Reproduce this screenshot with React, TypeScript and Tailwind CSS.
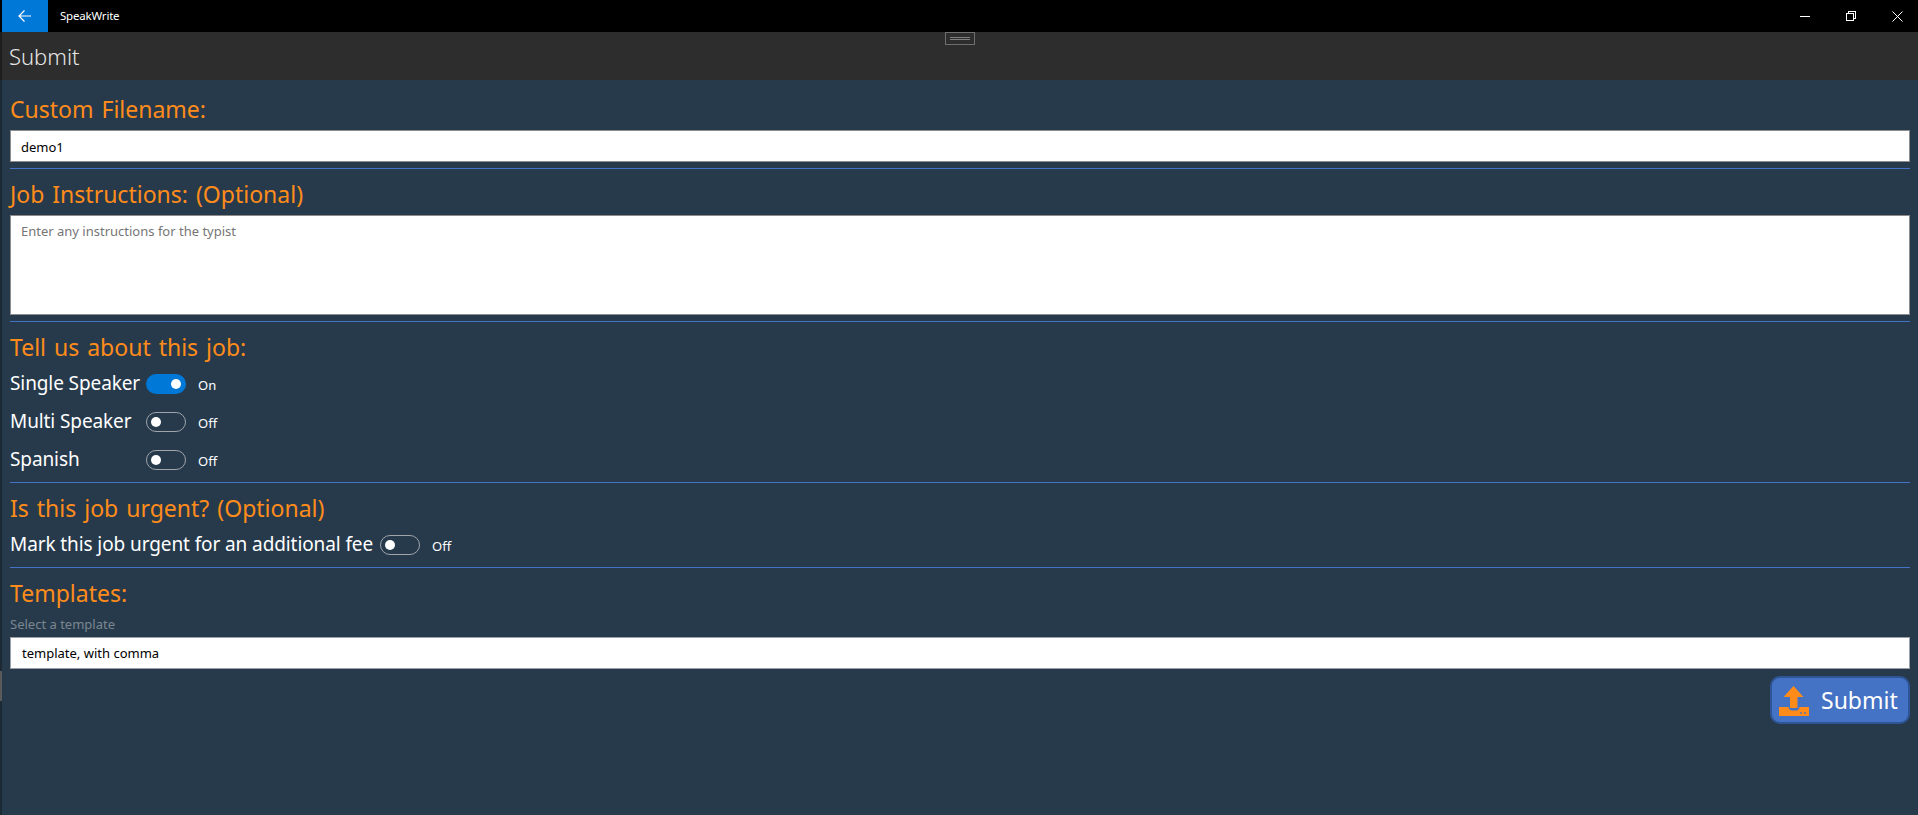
const font = { fontFamily: '"Noto Sans", "Open Sans", sans-serif' };

function Toggle({ on }: { on?: boolean }) {
  return (
    <div className={on ? "flex h-5 w-10 items-center justify-end rounded-full bg-[#0078d7] px-[5px]" : "flex h-5 w-10 items-center justify-start rounded-full border border-[#a0a5aa] px-[4px]"}>
      <div className="h-[10px] w-[10px] rounded-full bg-white" />
    </div>
  );
}

function Heading({ children }: { children: string }) {
  return <div className="h-[26px] text-[23px] leading-[26px] text-[#ff8c1a] [word-spacing:2px]">{children}</div>;
}

function Divider() {
  return <div className="h-px bg-[#4472c4]" />;
}

function ToggleRow({ label, on, labelW }: { label: string; on?: boolean; labelW: string }) {
  return (
    <div className="flex h-5 items-center">
      <div className={`${labelW} pb-[2px] text-[19px] leading-5 tracking-[-0.1px] text-white`}>{label}</div>
      <Toggle on={on} />
      <div className="ml-3 pt-[2px] text-[13px] leading-5 text-white">{on ? "On" : "Off"}</div>
    </div>
  );
}

export default function App() {
  return (
    <div style={font} className="flex h-[815px] w-[1918px] flex-col overflow-hidden bg-[#263a4c]">
      <div className="flex h-8 shrink-0 items-center bg-black pl-[2px]">
        <div className="flex h-8 w-[46px] items-center justify-center bg-[#0078d7]">
          <svg width="16" height="16" viewBox="0 0 16 16" fill="none" stroke="white" strokeWidth="1.2">
            <path d="M7.5 2.5 2 8l5.5 5.5M2 8h12" />
          </svg>
        </div>
        <div className="ml-3 text-[11.5px] leading-8 tracking-[-0.2px] text-white">SpeakWrite</div>
        <div className="ml-auto -mr-[2px] flex h-8 items-center">
          <div className="flex h-8 w-[46px] items-center justify-center">
            <div className="h-px w-[10px] bg-white" />
          </div>
          <div className="flex h-8 w-[46px] items-center justify-center">
            <svg width="10" height="10" viewBox="0 0 10 10" fill="none" stroke="white" strokeWidth="1" shapeRendering="crispEdges">
              <path d="M.5 2.5h7v7h-7zM2.5 2.5V.5h7v7H7.5" />
            </svg>
          </div>
          <div className="flex h-8 w-[46px] items-center justify-center">
            <svg width="11" height="11" viewBox="0 0 11 11" fill="none" stroke="white" strokeWidth="1">
              <path d="M.5.5l10 10M10.5.5l-10 10" />
            </svg>
          </div>
        </div>
      </div>
      <div className="relative flex h-12 shrink-0 items-center border-l-2 border-[#1e1e1e] bg-[#2d2d2d] pl-[7px] text-[22px] font-light text-[#e6e6e6]">
        Submit
        <div className="absolute left-[943px] top-0 flex h-[13px] w-[30px] flex-col items-center justify-center gap-[1px] border border-[#6e6e6e]">
          <div className="h-px w-5 bg-[#7f7f7f]" />
          <div className="h-px w-5 bg-[#7f7f7f]" />
        </div>
      </div>
      <div className="flex flex-1">
        <div className="flex w-[2px] shrink-0 flex-col bg-[#1c2a35]">
          <div className="mt-[591px] h-[30px] bg-[#5a5a5a]" />
        </div>
        <div className="flex w-full flex-col pl-2 pr-2">
          <div className="mt-4"><Heading>Custom Filename:</Heading></div>
          <div className="mt-2 flex h-8 items-center border border-[#8c8c8c] bg-white px-[10px] pt-[3px] text-[13px] text-black">demo1</div>
          <div className="mt-[6px]"><Divider /></div>
          <div className="mt-[12px]"><Heading>Job Instructions: (Optional)</Heading></div>
          <div className="mt-2 h-[100px] border border-[#8c8c8c] bg-white px-[10px] pt-[5px] text-[13px] leading-5 text-[#767676]">Enter any instructions for the typist</div>
          <div className="mt-[6px]"><Divider /></div>
          <div className="mt-[12px]"><Heading>Tell us about this job:</Heading></div>
          <div className="mt-[14px] flex flex-col gap-[18px]">
            <ToggleRow label="Single Speaker" on labelW="w-[136px]" />
            <ToggleRow label="Multi Speaker" labelW="w-[136px]" />
            <ToggleRow label="Spanish" labelW="w-[136px]" />
          </div>
          <div className="mt-3"><Divider /></div>
          <div className="mt-[12px]"><Heading>Is this job urgent? (Optional)</Heading></div>
          <div className="mt-[14px]"><ToggleRow label="Mark this job urgent for an additional fee" labelW="w-[370px]" /></div>
          <div className="mt-3"><Divider /></div>
          <div className="mt-[12px]"><Heading>Templates:</Heading></div>
          <div className="mt-2 h-5 text-[13px] leading-5 text-[#7b8690]">Select a template</div>
          <div className="mt-[3px] flex h-8 items-center border border-[#9aa0a6] bg-white px-[11px] pt-[2px] text-[13px] text-black">template, with comma</div>
          <div className="mt-[7px] flex justify-end">
            <div className="flex h-[48px] w-[140px] items-center rounded-[10px] border-2 border-[#2f5597] bg-[#4472c4] pl-[7px] pt-[1px] text-[23px] text-white">
              <svg width="30" height="30" viewBox="0 0 30 30" fill="#ff8c1a">
                <path d="M14.5 0 24.5 11H18.5V22H11V11H4.5z" />
                <path d="M0 21H9.5C10 23 11 24.5 13 24.5H17C19 24.5 20 23 20.5 21H30V30H0z" />
                <path d="M21 27h2M22 26v2M25 27h2M26 26v2" stroke="#4472c4" strokeWidth="0.8" />
              </svg>
              <span className="ml-3">Submit</span>
            </div>
          </div>
        </div>
      </div>
    </div>
  );
}
